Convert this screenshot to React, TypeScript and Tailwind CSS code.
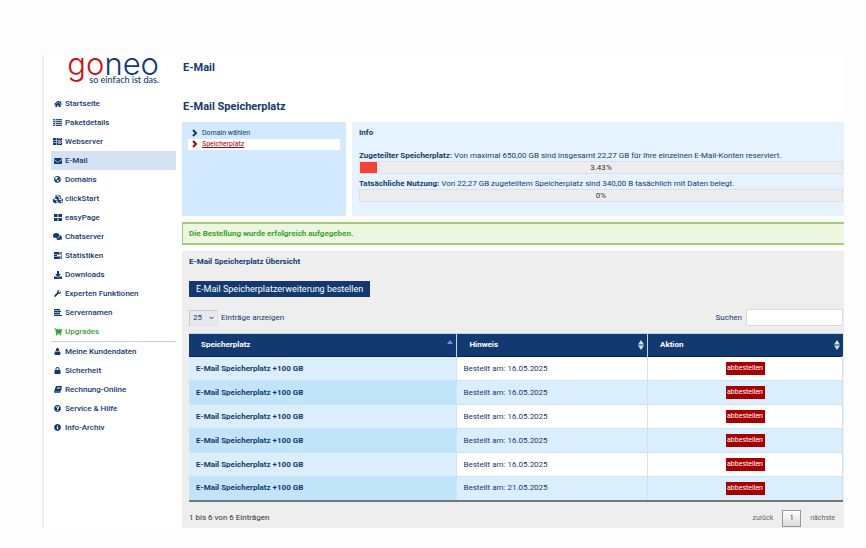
import { ReactNode } from "react";
import {
  FaHome,
  FaEnvelope,
  FaGlobeAmericas,
  FaCubes,
  FaComments,
  FaDownload,
  FaWrench,
  FaShoppingCart,
  FaLock,
  FaQuestionCircle,
  FaInfoCircle,
} from "react-icons/fa";

function ListIcon() {
  return (
    <svg viewBox="0 0 9 7" width="9" height="7" fill="currentColor" opacity="0.85">
      <path d="M0 0h2v1H0zM3 0h6v1H3zM0 2h2v1H0zM3 2h6v1H3zM0 4h2v1H0zM3 4h6v1H3zM0 6h2v1H0zM3 6h6v1H3z" />
      <path d="M0 0h9v7H0z" opacity="0.35" />
    </svg>
  );
}

function ServerIcon() {
  return (
    <svg viewBox="0 0 18 14" width="9" height="7" fill="currentColor">
      <path d="M0 0h7v4H0zM8 0h10v4H8zM0 5h7v4H0zM8 5h10v4H8zM0 10h7v4H0zM8 10h10v4H8z" />
      <path d="M10 1h6v1h-6zM10 6h6v1h-6zM10 11h6v1h-6z" fill="#fff" />
    </svg>
  );
}

function GridIcon() {
  return (
    <svg viewBox="0 0 8 7" width="8" height="7" fill="currentColor">
      <path d="M0 0h3.600v3H0zM4.400 0H8v3H4.400zM0 4h3.600v3H0zM4.400 4H8v3H4.400z" />
    </svg>
  );
}

function TasksIcon() {
  return (
    <svg viewBox="0 0 16 14" width="8" height="7" fill="currentColor">
      <path
        fillRule="evenodd"
        d="M0 0h16v4H0zM10 1h5v2h-5zM0 5h16v4H0zM6 6h9v2H6zM0 10h16v4H0zM11 11h4v2h-4z"
      />
    </svg>
  );
}

function NamesIcon() {
  return (
    <svg viewBox="0 0 8 7" width="8" height="7" fill="currentColor">
      <path d="M0 0h6v1H0zM0 2h7v1H0zM0 4h6v1H0zM0 6h8v1H0z" />
      <path d="M0 0h6v6H0z" opacity="0.45" />
    </svg>
  );
}

function UserIcon() {
  return (
    <svg viewBox="0 0 14 14" width="7" height="7" fill="currentColor">
      <circle cx="7" cy="3.500" r="3.500" />
      <path d="M3.800 6.500C1.500 7 1 9.500 1 11.500 1 13 2 14 3.500 14h7c1.500 0 2.500-1 2.500-2.500 0-2-.5-4.500-2.800-5C9 8 5 8 3.800 6.500z" />
    </svg>
  );
}

function BookIcon() {
  return (
    <svg viewBox="0 0 16 14" width="8" height="7" fill="currentColor">
      <path
        fillRule="evenodd"
        d="M5.500 0H14.500c1 0 1.600.8 1.300 1.800l-2.600 8.700c-.2.700-.8 1-1.500 1H3.200c-.7 0-.9.800-.1.900h9.300c.7 0 1-.4 1.200-1l2-6.500v1.800l-2.200 6c-.3.800-1 1.300-1.800 1.300H2.500C.9 14-.2 12.500.2 11L3.200 1.800C3.500.8 4.400 0 5.500 0zM6.500 2.500l-.3 1h6.500l.3-1zM5.800 5l-.3 1H12l.3-1z"
      />
    </svg>
  );
}

function ChevronIcon() {
  return (
    <svg viewBox="0 0 6 9" width="6" height="9" fill="none" stroke="currentColor" strokeWidth="2">
      <path d="M1 1l3 3-3 3" />
    </svg>
  );
}

type NavItem = { label: string; icon: ReactNode; className?: string };

const mainNav: NavItem[] = [
  { label: "Startseite", icon: <FaHome size={8} /> },
  { label: "Paketdetails", icon: <ListIcon /> },
  { label: "Webserver", icon: <ServerIcon /> },
  { label: "E-Mail", icon: <FaEnvelope size={8} />, className: "bg-[#d5e2f3] font-bold" },
  { label: "Domains", icon: <FaGlobeAmericas size={7} /> },
  { label: "clickStart", icon: <FaCubes size={10} /> },
  { label: "easyPage", icon: <GridIcon /> },
  { label: "Chatserver", icon: <FaComments size={9} /> },
  { label: "Statistiken", icon: <TasksIcon /> },
  { label: "Downloads", icon: <FaDownload size={8} /> },
  { label: "Experten Funktionen", icon: <FaWrench size={7} /> },
  { label: "Servernamen", icon: <NamesIcon /> },
  { label: "Upgrades", icon: <FaShoppingCart size={8} />, className: "text-[#35a435]" },
];

const accountNav: NavItem[] = [
  { label: "Meine Kundendaten", icon: <UserIcon /> },
  { label: "Sicherheit", icon: <FaLock size={7} /> },
  { label: "Rechnung-Online", icon: <BookIcon /> },
  { label: "Service & Hilfe", icon: <FaQuestionCircle size={7} /> },
  { label: "Info-Archiv", icon: <FaInfoCircle size={7} /> },
];

const orders = [
  { name: "E-Mail Speicherplatz +100 GB", date: "16.05.2025" },
  { name: "E-Mail Speicherplatz +100 GB", date: "16.05.2025" },
  { name: "E-Mail Speicherplatz +100 GB", date: "16.05.2025" },
  { name: "E-Mail Speicherplatz +100 GB", date: "16.05.2025" },
  { name: "E-Mail Speicherplatz +100 GB", date: "16.05.2025" },
  { name: "E-Mail Speicherplatz +100 GB", date: "21.05.2025" },
];

function NavList({ items }: { items: NavItem[] }) {
  return (
    <ul>
      {items.map((item) => (
        <li key={item.label}>
          <a href="#" className={`flex h-[19px] items-center gap-0.5 pl-px font-medium ${item.className ?? ""}`}>
            <span className="flex w-[11px] justify-center">{item.icon}</span>
            {item.label}
          </a>
        </li>
      ))}
    </ul>
  );
}

function Sidebar() {
  return (
    <aside className="w-[138px] shrink-0 pr-1.5 pl-[7px]">
      <a href="#" className="flex h-[39px] flex-col items-end pr-[17px]">
        <span className="font-['Inter',sans-serif] text-[31px] leading-[18px] font-light text-[#123a78]">
          <span className="text-[#c8141c]">go</span>neo
        </span>
        <span className="font-['Lato',sans-serif] text-[9px] leading-[14px] font-medium">so einfach ist das.</span>
      </a>
      <nav>
        <NavList items={mainNav} />
        <div className="border-t border-[#c9cdea]" />
        <NavList items={accountNav} />
      </nav>
    </aside>
  );
}

function Usage({ title, text, percent }: { title: string; text: string; percent: number }) {
  return (
    <div>
      <p className="leading-[10px]">
        <b>{title}</b> {text}
      </p>
      <div className="relative h-[13px] border border-[#dcdfe3] bg-[#ededed]">
        <div className="h-full bg-[#f44336]" style={{ width: `${percent}%` }} />
        <span className="absolute inset-0 text-center leading-[12px] text-[#333]">{percent}%</span>
      </div>
    </div>
  );
}

function SortIcon({ active }: { active?: boolean }) {
  return active ? (
    <svg viewBox="0 0 6 10" width="6" height="10">
      <path d="M3 0l3 4H0z" fill="#8585ea" />
    </svg>
  ) : (
    <svg viewBox="0 0 6 10" width="6" height="10" fill="#d8dfea">
      <path d="M3 0l3 4.500H0zM3 10l3-4.500H0z" />
    </svg>
  );
}

function HeadCell({ label, width, active }: { label: string; width: string; active?: boolean }) {
  return (
    <th className={`h-[23px] border-r border-[#b9d7ee] pr-[3px] pl-3 text-left text-white last:border-r-0 ${width}`}>
      <div className="flex items-center justify-between">
        {label}
        <SortIcon active={active} />
      </div>
    </th>
  );
}

function OrderTable() {
  return (
    <table className="w-full table-fixed border-collapse border-b-2 border-[#70777d]">
      <thead className="border-t border-b border-t-[#b9d7ee] border-b-[#0a2347] bg-[#123a70]">
        <tr>
          <HeadCell label="Speicherplatz" width="w-[41%]" active />
          <HeadCell label="Hinweis" width="w-auto" />
          <HeadCell label="Aktion" width="w-[195px]" />
        </tr>
      </thead>
      <tbody>
        {orders.map((order, i) => (
          <tr key={i} className="group h-6 border-b border-[#c8e6f8] bg-white even:bg-[#dbeefc] last:border-b-0">
            <td className="border-r border-[#c8e6f8] bg-[#dbeefc] pl-[7px] font-bold group-even:bg-[#c2e4f9]">
              {order.name}
            </td>
            <td className="border-r border-[#c8e6f8] pl-1.5">Bestellt am: {order.date}</td>
            <td className="border-r border-[#c8e6f8] text-center">
              <button className="h-[13px] w-[39px] bg-[#a60000] align-middle text-[7px] leading-[13px] text-white">
                abbestellen
              </button>
            </td>
          </tr>
        ))}
      </tbody>
    </table>
  );
}

function Overview() {
  return (
    <section className="mt-1.5 bg-[#eeeeee] pr-px pb-px pl-[7px]">
      <h3 className="pt-1.5 font-bold leading-[10px]">E-Mail Speicherplatz Übersicht</h3>
      <button className="mt-3.5 block h-4 bg-[#123a70] px-[7px] text-[9px] leading-[16px] text-white">
        E-Mail Speicherplatzerweiterung bestellen
      </button>
      <div className="mt-3 flex h-[17px] items-center justify-between">
        <label className="flex items-center gap-[3px]">
          <span className="relative flex items-center">
            <select className="h-4 w-[29px] appearance-none border border-[#c8c8cc] border-r-[#e4e4e8] border-b-[#e4e4e8] bg-[#e9e9ed] pl-[3px]">
              <option>25</option>
              <option>50</option>
            </select>
            <svg
              viewBox="0 0 5 4"
              width="5"
              height="4"
              fill="none"
              stroke="currentColor"
              className="pointer-events-none absolute right-1"
            >
              <path d="M.5.800l2 2 2-2" />
            </svg>
          </span>
          Einträge anzeigen
        </label>
        <label className="flex items-center gap-1">
          Suchen
          <input type="text" className="h-[17px] w-[97px] border border-[#dcdcdc] bg-white px-1" />
        </label>
      </div>
      <div className="mt-[7px]">
        <OrderTable />
      </div>
      <div className="mt-2 flex items-center justify-between text-[#333]">
        <span>1 bis 6 von 6 Einträgen</span>
        <div className="flex items-center gap-[9px] pr-2 text-[7px] text-[#666]">
          <button>zurück</button>
          <button className="h-[17px] w-[19px] border border-[#979797] bg-linear-to-b from-white to-[#dcdcdc] text-[#333]">
            1
          </button>
          <button>nächste</button>
        </div>
      </div>
    </section>
  );
}

function App() {
  return (
    <div className="min-h-screen bg-[#fdfdfd] pt-[55px] pr-[22px] pb-5 pl-[42px] font-['Roboto',Arial,sans-serif] text-[8px] text-[#123a70]">
      <div className="flex border-l-2 border-[#eeeeee] bg-white">
        <Sidebar />
        <main className="min-w-0 flex-1">
          <h1 className="h-10 pt-1.5 pl-px text-[11px] font-bold leading-[14px]">E-Mail</h1>
          <h2 className="h-[27px] pt-[5px] pl-px text-[11px] font-bold leading-[14px]">E-Mail Speicherplatz</h2>
          <div className="grid grid-cols-[1fr_3fr] gap-1.5">
            <ul className="bg-[#d3e9ff] p-1.5">
              <li>
                <a href="#" className="flex h-[11px] items-center gap-1 pl-1 text-[7px]">
                  <ChevronIcon /> Domain wählen
                </a>
              </li>
              <li>
                <a href="#" className="flex h-[11px] items-center gap-1 bg-white pl-1 text-[7px] text-[#b00000]">
                  <ChevronIcon /> <span className="underline">Speicherplatz</span>
                </a>
              </li>
            </ul>
            <section className="flex h-[94px] flex-col bg-[#e6f3ff] pt-1.5 pr-px pl-[7px]">
              <h3 className="font-bold leading-[10px]">Info</h3>
              <div className="mt-[13px] flex flex-col gap-[5px]">
                <Usage
                  title="Zugeteilter Speicherplatz:"
                  text="Von maximal 650,00 GB sind insgesamt 22,27 GB für Ihre einzelnen E-Mail-Konten reserviert."
                  percent={3.43}
                />
                <Usage
                  title="Tatsächliche Nutzung:"
                  text="Von 22,27 GB zugeteiltem Speicherplatz sind 340,00 B tasächlich mit Daten belegt."
                  percent={0}
                />
              </div>
            </section>
          </div>
          <p className="mt-1.5 border-y-2 border-l border-[#a2cf76] bg-[#edf6de] px-1.5 leading-[19px] font-bold text-[#35a435]">
            Die Bestellung wurde erfolgreich aufgegeben.
          </p>
          <Overview />
        </main>
      </div>
    </div>
  );
}

export default App;
